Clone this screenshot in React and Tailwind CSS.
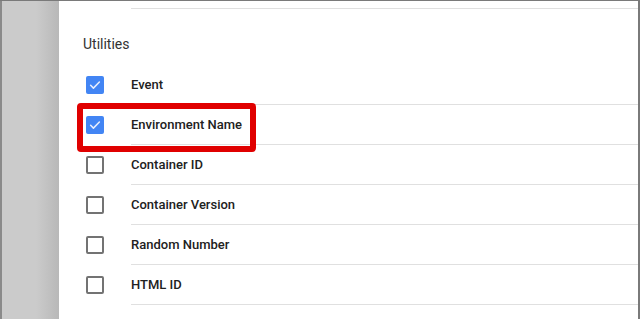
const rows = [
  { label: "Event", checked: true },
  { label: "Environment Name", checked: true, highlight: true },
  { label: "Container ID", checked: false },
  { label: "Container Version", checked: false },
  { label: "Random Number", checked: false },
  { label: "HTML ID", checked: false },
];

const Checkbox = ({ checked }) =>
  checked ? (
    <div className="w-[18px] h-[18px] rounded-[2px] bg-[#4285f4] flex items-center justify-center">
      <svg width="14" height="14" viewBox="0 0 24 24" fill="none">
        <path
          d="M4.5 12.5l4.8 4.8L19.5 7"
          stroke="#e8eefc"
          strokeWidth="2.6"
          strokeLinecap="round"
          strokeLinejoin="round"
        />
      </svg>
    </div>
  ) : (
    <div className="w-[18px] h-[18px] rounded-[2px] border-2 border-[#737373] bg-white" />
  );

export default function App() {
  return (
    <div
      className="w-[640px] h-[319px] flex border-t border-[#7a7a7a] overflow-hidden"
      style={{ fontFamily: "Roboto, 'Liberation Sans', sans-serif" }}
    >
      <div className="w-[59px] flex-shrink-0 border-l-2 border-[#8a8a8a] bg-gradient-to-r from-[#cbcbcb] from-60% to-[#b8b8b8]" />

      <div className="flex-1 bg-white border-r-2 border-[#7a7a7a] pl-6">
        <div className="ml-12 mt-[7px] h-px bg-[#e0e0e0]" />

        <div className="mt-[25px] h-5 leading-5 text-[14px] text-[#333333]">
          Utilities
        </div>

        <div className="mt-[11px]">
          {rows.map((row) => (
            <div key={row.label} className="relative flex h-10">
              <div className="w-12 flex items-center pl-[3px]">
                <Checkbox checked={row.checked} />
              </div>
              <div className="flex-1 flex items-center border-b border-[#e0e0e0] text-[13px] font-medium text-[#212121]">
                {row.label}
              </div>
              {row.highlight && (
                <div className="absolute left-[-6px] top-[-2px] w-[179px] h-[49px] border-[6px] border-[#e00000] rounded-[4px]" />
              )}
            </div>
          ))}
        </div>
      </div>
    </div>
  );
}
